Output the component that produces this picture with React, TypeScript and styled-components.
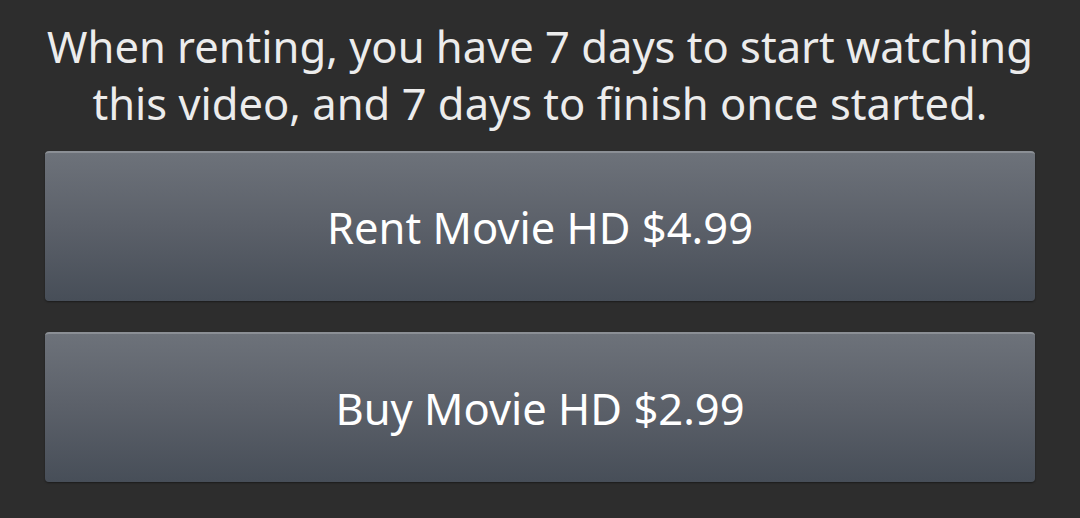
import styled, { createGlobalStyle } from "styled-components";

const GlobalStyle = createGlobalStyle`
  html, body {
    margin: 0;
    padding: 0;
    background: #2d2d2d;
  }
  body {
    font-family: "Noto Sans", "Open Sans", sans-serif;
  }
`;

const Container = styled.div`
  width: 1080px;
  height: 518px;
  box-sizing: border-box;
  padding: 18px 45px 0;
  display: flex;
  flex-direction: column;
  align-items: stretch;
`;

const Notice = styled.p`
  margin: 0;
  color: #ececec;
  font-size: 43.5px;
  line-height: 57px;
  text-align: center;
  white-space: nowrap;
`;

const Actions = styled.div`
  margin-top: 19px;
  display: flex;
  flex-direction: column;
  gap: 31px;
`;

const PurchaseButton = styled.button`
  height: 150px;
  border: none;
  border-top: 2px solid #8b8f95;
  border-radius: 4px;
  background: linear-gradient(180deg, #6d727a 0%, #5b6069 50%, #474e58 100%);
  color: #ffffff;
  font-family: inherit;
  font-size: 43.5px;
  cursor: pointer;
  box-shadow: 0 1px 2px rgba(0, 0, 0, 0.4);
`;

const options = [
  { id: "rent", label: "Rent Movie HD $4.99" },
  { id: "buy", label: "Buy Movie HD $2.99" },
];

function App() {
  return (
    <>
      <GlobalStyle />
      <Container>
        <Notice>
          When renting, you have 7 days to start watching
          <br />
          this video, and 7 days to finish once started.
        </Notice>
        <Actions>
          {options.map((opt) => (
            <PurchaseButton key={opt.id}>{opt.label}</PurchaseButton>
          ))}
        </Actions>
      </Container>
    </>
  );
}

export default App;
